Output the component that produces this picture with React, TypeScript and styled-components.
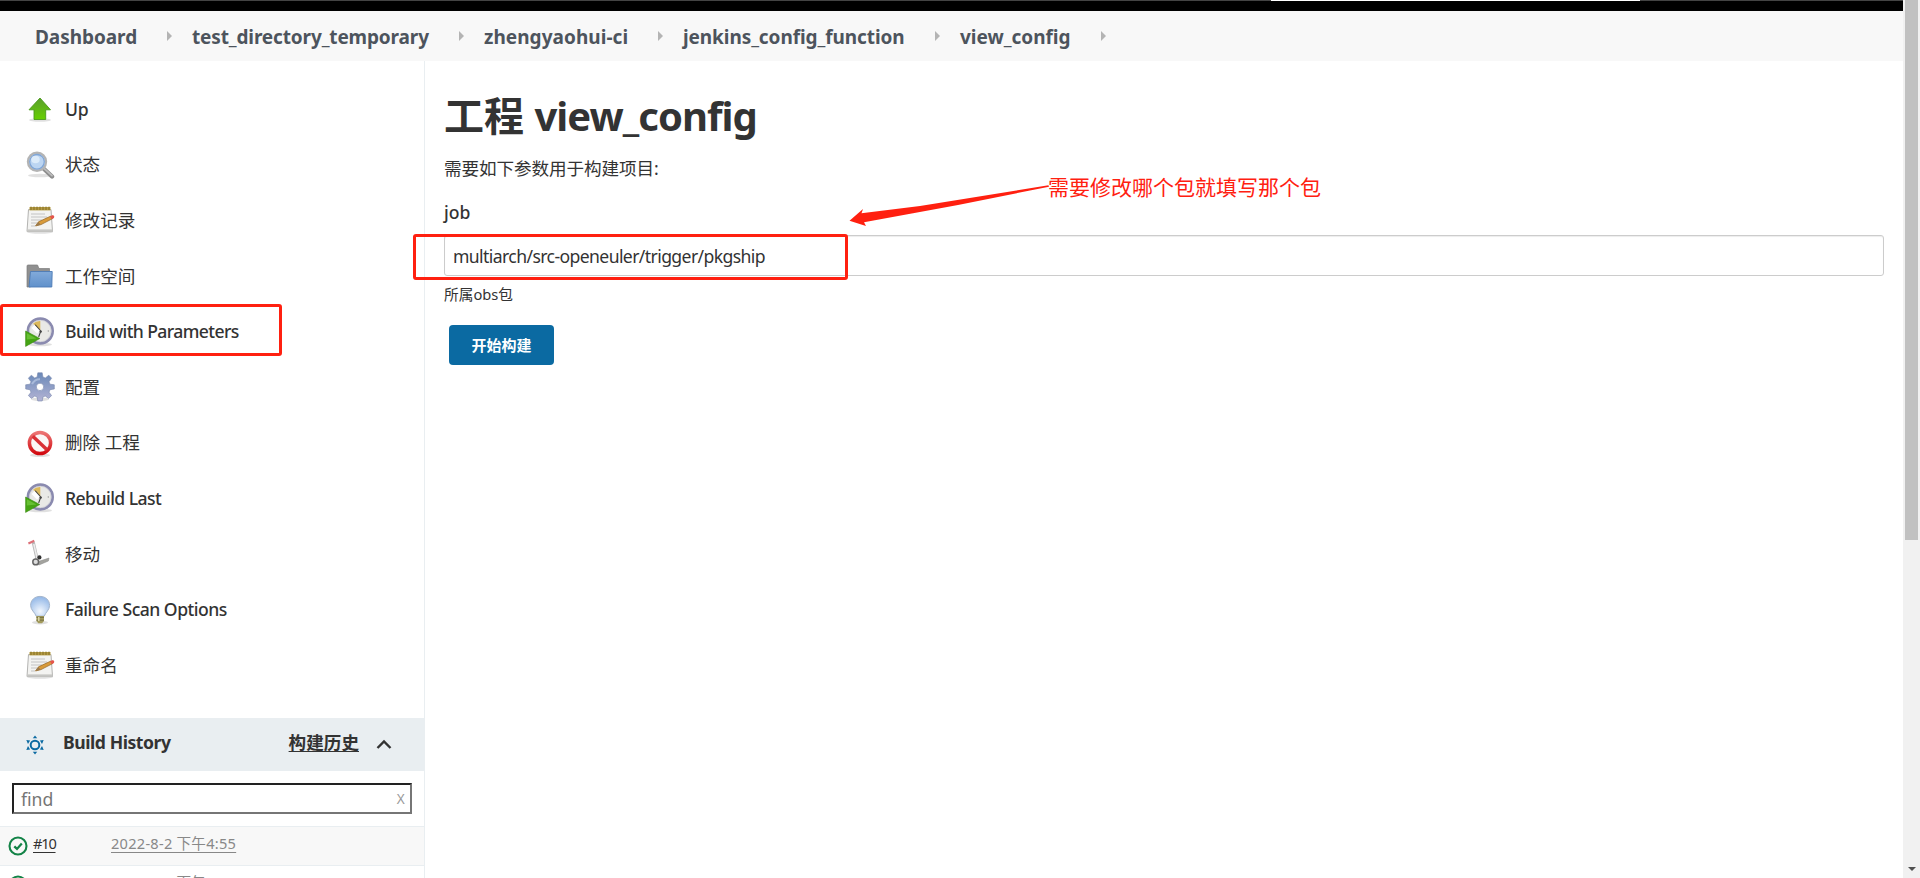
import React from "react";
import styled, { createGlobalStyle } from "styled-components";

const Global = createGlobalStyle`
  * { box-sizing: border-box; }
  body {
    margin: 0;
    overflow: hidden;
    background: #fff;
    color: #333;
    font-family: "Noto Sans", "Open Sans", "Noto Sans CJK SC", sans-serif;
    font-size: 17.6px;
  }
`;

const Screen = styled.div`
  position: relative;
  display: flex;
  width: 1920px;
  height: 878px;
  overflow: hidden;
`;

const Page = styled.div`
  width: 1903px;
  display: flex;
  flex-direction: column;
`;

const TopBar = styled.div`
  height: 11px;
  flex: none;
  background: #000;
  border-top: 1px solid #444;
`;

const TopBarHighlight = styled.div`
  position: absolute;
  top: 0;
  left: 1271px;
  width: 369px;
  height: 1px;
  background: #fff;
`;

const Breadcrumbs = styled.nav`
  height: 50px;
  flex: none;
  display: flex;
  align-items: center;
  background: #f8f8f8;
  padding-left: 35px;
`;

const Crumb = styled.a<{ $w: number; $ls: number }>`
  width: ${(p) => p.$w}px;
  flex: none;
  display: flex;
  padding-top: 2px;
  color: #4d545d;
  font-size: 19px;
  font-weight: 700;
  line-height: 26px;
  white-space: nowrap;
  letter-spacing: ${(p) => p.$ls}px;
`;

const CrumbArrow = styled.svg`
  width: 5px;
  height: 10px;
  margin-right: 20px;
  flex: none;
`;

const Columns = styled.div`
  flex: 1;
  min-height: 0;
  display: flex;
`;

const Sidebar = styled.aside`
  width: 425px;
  flex: none;
  border-right: 1px solid #e9eef1;
  padding-top: 20.5px;
  display: flex;
  flex-direction: column;
  overflow: hidden;
`;

const Tasks = styled.div`
  height: 636.5px;
  flex: none;
`;

const Task = styled.a<{ $ls?: number }>`
  height: 55.6px;
  display: flex;
  align-items: center;
  padding-left: 25px;
  gap: 10px;
  white-space: nowrap;
  letter-spacing: ${(p) => p.$ls ?? 0}px;
  font-weight: ${(p) => (p.$ls === undefined ? 400 : 500)};
  line-height: 24px;

  svg {
    width: 30px;
    height: 30px;
    flex: none;
  }

  span {
    padding-bottom: 1px;
  }
`;

const HistoryHeader = styled.div`
  height: 53px;
  flex: none;
  display: flex;
  align-items: center;
  background: #e9eef1;
  padding: 0 32px 1px 26px;
  font-weight: 700;
`;

const HistoryTitle = styled.span`
  margin-left: 19px;
  padding-bottom: 5px;
  flex: 1;
  letter-spacing: -0.45px;
`;

const HistoryTrend = styled.a`
  text-decoration: underline;
  text-underline-offset: 2px;
  text-decoration-thickness: 1px;
  margin-right: 17px;
  padding-bottom: 5px;
`;

const FindBox = styled.div`
  height: 31px;
  flex: none;
  margin: 12px 12px 12px;
  border: 2px solid;
  border-color: #222 #767676 #767676 #222;
  display: flex;
  align-items: center;
  justify-content: space-between;
  padding: 0 5px 0 7px;
  color: #757575;
  font-weight: 400;
`;

const FindClear = styled.span`
  color: #999;
  font-size: 14px;
  font-family: "Liberation Sans", sans-serif;
  transform: scaleX(0.9);
`;

const BuildRow = styled.div<{ $odd?: boolean }>`
  height: 39px;
  flex: none;
  display: flex;
  align-items: center;
  border-top: 1px solid #e9eef1;
  background: ${(p) => (p.$odd ? "#f8f8f8" : "#fff")};
  padding-left: 8px;
  font-size: 14.6px;

  svg {
    width: 20px;
    height: 20px;
    flex: none;
  }
`;

const BuildNumber = styled.a`
  width: 78px;
  margin-left: 5px;
  padding-bottom: 7px;
  text-decoration: underline;
  text-underline-offset: 3px;
  letter-spacing: -1.2px;
`;

const BuildDate = styled.a`
  color: #888;
  padding-bottom: 7px;
  text-decoration: underline;
  text-underline-offset: 3px;
  letter-spacing: 0.25px;
  white-space: nowrap;
`;

const Main = styled.main`
  flex: 1;
  padding: 29px 19px 0 19px;
  display: flex;
  flex-direction: column;
`;

const Title = styled.h1`
  margin: 0;
  height: 52px;
  line-height: 52px;
  font-size: 40px;
  font-weight: 700;
  white-space: nowrap;

  span {
    letter-spacing: -0.95px;
  }
`;

const Intro = styled.p`
  margin: 12px 0 0;
  height: 28px;
  line-height: 28px;
  font-weight: 400;
  letter-spacing: -0.1px;
`;

const FieldLabel = styled.label`
  margin-top: 15px;
  height: 30px;
  line-height: 30px;
  font-weight: 500;
`;

const FieldInput = styled.div`
  margin-top: 8px;
  height: 41px;
  border: 1px solid #ccc;
  border-radius: 3px;
  box-shadow: inset 0 1px 1px rgba(0, 0, 0, 0.075);
  padding-left: 8px;
  display: flex;
  align-items: center;
  letter-spacing: -0.6px;
  font-weight: 400;
`;

const Help = styled.div`
  margin-top: 7px;
  height: 22px;
  line-height: 22px;
  font-size: 14.7px;
  font-weight: 400;
`;

const BuildButton = styled.button`
  margin: 20px 0 0 5px;
  width: 105px;
  height: 40px;
  border: 0;
  border-radius: 4px;
  padding: 0 0 2px;
  background: #0b6aa2;
  color: #fff;
  font-family: inherit;
  font-size: 15px;
  font-weight: 700;
`;

const Scrollbar = styled.div`
  width: 17px;
  height: 878px;
  background: #f1f1f1;
  display: flex;
  flex-direction: column;
  align-items: center;
  justify-content: space-between;
  padding-bottom: 7px;
`;

const ScrollThumb = styled.div`
  width: 13px;
  height: 540px;
  background: #c1c1c1;
`;

const Marker = styled.div<{ $x: number; $y: number; $w: number; $h: number }>`
  position: absolute;
  left: ${(p) => p.$x}px;
  top: ${(p) => p.$y}px;
  width: ${(p) => p.$w}px;
  height: ${(p) => p.$h}px;
  border: 3px solid #ff2010;
  border-radius: 3px;
`;

const MarkerArrow = styled.svg`
  position: absolute;
  left: 840px;
  top: 180px;
  width: 210px;
  height: 50px;
`;

const MarkerNote = styled.div`
  position: absolute;
  left: 1048px;
  top: 172px;
  line-height: 30px;
  font-size: 21px;
  font-weight: 400;
  color: #ff2010;
  white-space: nowrap;
`;

const Shade = ({ cy = 26, rx = 11 }: { cy?: number; rx?: number }) => (
  <ellipse cx="15" cy={cy} rx={rx} ry="1.8" fill="#000" opacity="0.12" />
);

const UpIcon = () => (
  <svg viewBox="0 0 30 30">
    <defs>
      <linearGradient id="up" x1="0" y1="0" x2="0" y2="1">
        <stop offset="0" stopColor="#5a9e2c" />
        <stop offset="1" stopColor="#66d000" />
      </linearGradient>
    </defs>
    <Shade />
    <path d="M15 4 L25.5 15.8 H20.7 V25.5 H9 V15.8 H4 Z" fill="url(#up)" stroke="#4a9a1c" strokeWidth="0.9" strokeLinejoin="round" />
  </svg>
);

const SearchIcon = () => (
  <svg viewBox="0 0 30 30">
    <Shade cy={25.5} rx={12} />
    <path d="M18.5 18.5 L27 26.5" stroke="#8d8d8d" strokeWidth="4.4" strokeLinecap="round" />
    <path d="M19 18.3 L27 25.7" stroke="#bdbdbd" strokeWidth="1.8" strokeLinecap="round" />
    <circle cx="12" cy="11.8" r="9" fill="#e9eff7" stroke="#b4b4b4" strokeWidth="2.4" />
    <circle cx="12" cy="11.8" r="7.3" fill="#bcd5f2" stroke="#7fa5d6" strokeWidth="1.3" />
    <ellipse cx="10.5" cy="9.5" rx="4.2" ry="3.8" fill="#e2eefb" opacity="0.85" />
  </svg>
);

const NotepadIcon = () => (
  <svg viewBox="0 0 30 30">
    <Shade cy={27} rx={13} />
    <path d="M3.5 4.5 H26 L27.5 26.5 H2 Z" fill="#f3f3f1" stroke="#b3b3b1" strokeWidth="1" />
    <path d="M2 24.4 H27.5 V26.8 H2 Z" fill="#c6c6c4" />
    <rect x="4.5" y="2" width="21" height="3.4" fill="#b59b45" />
    <path d="M6 1.6 V5 M9 1.6 V5 M12 1.6 V5 M15 1.6 V5 M18 1.6 V5 M21 1.6 V5 M24 1.6 V5" stroke="#806c20" strokeWidth="0.9" />
    <path d="M6 9 H20 M6 12 H22 M6 15 H17 M6 18 H12 M6 21 H10" stroke="#c3c3c3" strokeWidth="1" />
    <path d="M10.5 21 L13.5 16.8 L26 11 L27.6 13.6 L16 19.6 Z" fill="#d99b3a" stroke="#926321" strokeWidth="0.7" />
    <path d="M10.5 21 L13.5 16.8 L15.5 19.8 Z" fill="#9b7a4c" />
    <path d="M25 11.2 L28 10 Q30 11 29 13 L26.6 14.2 Z" fill="#e4554c" />
  </svg>
);

const FolderIcon = () => (
  <svg viewBox="0 0 30 30">
    <defs>
      <linearGradient id="folder" x1="0" y1="0" x2="0" y2="1">
        <stop offset="0" stopColor="#82aada" />
        <stop offset="1" stopColor="#6091cb" />
      </linearGradient>
    </defs>
    <path d="M2 26 V5 Q2 4 3 4 H12.5 L14 7.5 H24.5 V12 H5.5 V26 Z" fill="#909090" stroke="#7c7c7c" strokeWidth="0.7" />
    <path d="M5.5 10.5 H27.2 L26.8 26 H4 Z" fill="url(#folder)" stroke="#4c7bb5" strokeWidth="0.9" strokeLinejoin="round" />
  </svg>
);

const ClockIcon = () => (
  <svg viewBox="0 0 30 30">
    <Shade cy={27.5} rx={12} />
    <circle cx="15.3" cy="14" r="12.4" fill="#e9e9e6" stroke="#8a8aaf" strokeWidth="2.6" />
    <circle cx="15.3" cy="14" r="10.8" fill="none" stroke="#c5c5d0" strokeWidth="0.6" />
    <path d="M15.3 13 L8 6.8 Q11 3.8 15.3 4 Z" fill="#dcb95a" />
    <path d="M8 9.5 L13.5 15" stroke="#fff" strokeWidth="4" />
    <path d="M10.5 8 L15.8 14 M15.8 14 L13.8 19.5" stroke="#444" strokeWidth="1.1" strokeLinecap="round" />
    <circle cx="15.7" cy="14.6" r="1.2" fill="#444" />
    <circle cx="23.3" cy="14" r="0.7" fill="#999" />
    <path d="M0.6 14 L14.8 21.5 L0.6 29.4 Z" fill="#45a414" stroke="#3a8a12" strokeWidth="0.6" />
    <path d="M1.8 16.2 L11.5 21.4 L1.8 22.4 Z" fill="#79cf45" opacity="0.65" />
  </svg>
);

const GearIcon = () => (
  <svg viewBox="0 0 30 30">
    <defs>
      <linearGradient id="gear" x1="0" y1="0" x2="0" y2="1">
        <stop offset="0" stopColor="#6a89b8" />
        <stop offset="1" stopColor="#b3b3d4" />
      </linearGradient>
    </defs>
    <Shade cy={27.3} rx={9} />
    <path
      fill="url(#gear)"
      stroke="#7787ad"
      strokeWidth="0.6"
      fillRule="evenodd"
      d="M12.8 0.8 H17.2 L17.9 5 L20.3 6 L23.8 3.2 L26.6 6.2 L24 9.8 L25 12.2 L29.3 12.8 V17 L25 17.7 L24 20.2 L26.6 23.6 L23.6 26.4 L20.2 24 L17.9 25 L17.2 29 H12.8 L12.1 25 L9.8 24 L6.4 26.4 L3.4 23.6 L6 20.2 L5 17.7 L0.7 17 V12.8 L5 12.2 L6 9.8 L3.4 6.2 L6.3 3.2 L9.7 6 L12.1 5 Z M15 11.2 A3.7 3.7 0 1 0 15 18.6 A3.7 3.7 0 1 0 15 11.2 Z"
    />
    <path d="M7 12 Q10 7 15 7.2" fill="none" stroke="#b9c9e4" strokeWidth="2" opacity="0.7" />
  </svg>
);

const StopIcon = () => (
  <svg viewBox="0 0 30 30">
    <defs>
      <linearGradient id="stop" x1="0" y1="0" x2="0" y2="1">
        <stop offset="0" stopColor="#ec7474" />
        <stop offset="1" stopColor="#d20a10" />
      </linearGradient>
    </defs>
    <Shade cy={27.2} rx={10} />
    <circle cx="15" cy="15" r="10.6" fill="#fbf6f6" stroke="url(#stop)" strokeWidth="3.5" />
    <path d="M7.8 8.2 L22 21.8" stroke="#d93036" strokeWidth="3.4" />
  </svg>
);

const TruckIcon = () => (
  <svg viewBox="0 0 30 30">
    <path d="M8.2 3 L12.3 21" stroke="#b9b9b9" strokeWidth="3.2" />
    <path d="M8.8 5 L12.4 20.5" stroke="#ededed" strokeWidth="1.6" />
    <path d="M3.4 4.4 L9.3 1.8" stroke="#dd7078" strokeWidth="2.2" />
    <path d="M10 23.6 L24 19 L23.4 22 L14 26 Z" fill="#a3a39e" stroke="#888" strokeWidth="0.5" />
    <circle cx="14.4" cy="18.4" r="2.1" fill="#333" />
    <circle cx="10.7" cy="22.9" r="2.9" fill="#ddd" stroke="#666" strokeWidth="1.5" />
  </svg>
);

const BulbIcon = () => (
  <svg viewBox="0 0 30 30">
    <defs>
      <radialGradient id="bulb" cx="0.5" cy="0.75" r="0.75">
        <stop offset="0" stopColor="#f2f7fe" />
        <stop offset="1" stopColor="#91b6e6" />
      </radialGradient>
    </defs>
    <Shade cy={27.6} rx={8} />
    <path d="M15 1.4 C20.8 1.4 24.6 5.4 24.6 10.4 C24.6 15 20.5 17.4 19.2 21.2 H11.2 C10 17.4 5.6 15 5.6 10.4 C5.6 5.4 9.4 1.4 15 1.4 Z" fill="url(#bulb)" stroke="#a5b6cc" strokeWidth="1" />
    <path d="M11.4 21 H19 V26 L17 28.3 H13.3 L11.4 26 Z" fill="#a39b5c" />
    <path d="M11.4 22.4 H19 M11.4 25.2 H19" stroke="#6b6640" strokeWidth="0.8" />
    <path d="M13.8 22 V26" stroke="#e4dfb0" strokeWidth="1.4" />
  </svg>
);

const WeatherIcon = () => (
  <svg width="18" height="22" viewBox="0 0 18 22">
    <circle cx="9" cy="12" r="4.3" fill="none" stroke="#0b6aa2" strokeWidth="2" />
    <g fill="#0b6aa2">
      <path d="M9 2.4 L11.2 5.3 H6.8 Z" />
      <path d="M9 21.6 L11.2 18.7 H6.8 Z" />
      <path d="M0.3 6.9 L4.1 7.5 L2 11 Z" />
      <path d="M17.7 6.9 L13.9 7.5 L16 11 Z" />
      <path d="M0.3 17.1 L4.1 16.5 L2 13 Z" />
      <path d="M17.7 17.1 L13.9 16.5 L16 13 Z" />
    </g>
  </svg>
);

const SuccessIcon = () => (
  <svg viewBox="0 0 20 20">
    <circle cx="10" cy="10" r="8.5" fill="none" stroke="#138347" strokeWidth="2.1" />
    <path d="M6.3 10.3 L9 12.9 L13.8 7.6" fill="none" stroke="#138347" strokeWidth="2.3" />
  </svg>
);

const crumbs: { label: string; w: number; ls: number }[] = [
  { label: "Dashboard", w: 132, ls: -0.05 },
  { label: "test_directory_temporary", w: 267, ls: -0.14 },
  { label: "zhengyaohui-ci", w: 174, ls: 0.05 },
  { label: "jenkins_config_function", w: 252, ls: -0.08 },
  { label: "view_config", w: 141, ls: 0 },
];

const tasks: { label: string; icon: React.ReactNode; ls?: number }[] = [
  { label: "Up", icon: <UpIcon />, ls: -0.3 },
  { label: "状态", icon: <SearchIcon /> },
  { label: "修改记录", icon: <NotepadIcon /> },
  { label: "工作空间", icon: <FolderIcon /> },
  { label: "Build with Parameters", icon: <ClockIcon />, ls: -0.6 },
  { label: "配置", icon: <GearIcon /> },
  { label: "删除 工程", icon: <StopIcon /> },
  { label: "Rebuild Last", icon: <ClockIcon />, ls: -0.55 },
  { label: "移动", icon: <TruckIcon /> },
  { label: "Failure Scan Options", icon: <BulbIcon />, ls: -0.52 },
  { label: "重命名", icon: <NotepadIcon /> },
];

const builds = [
  { number: "#10", date: "2022-8-2 下午4:55" },
  { number: "#9", date: "2022-8-1 下午4:24" },
];

export default function App() {
  return (
    <Screen>
      <Global />
      <Page>
        <TopBar />
        <Breadcrumbs>
          {crumbs.map((c) => (
            <React.Fragment key={c.label}>
              <Crumb $w={c.w} $ls={c.ls}>{c.label}</Crumb>
              <CrumbArrow viewBox="0 0 5 10">
                <path d="M0 0 L5 5 L0 10 Z" fill="#b4b4b4" />
              </CrumbArrow>
            </React.Fragment>
          ))}
        </Breadcrumbs>
        <Columns>
          <Sidebar>
            <Tasks>
              {tasks.map((t) => (
                <Task key={t.label} $ls={t.ls}>
                  {t.icon}
                  <span>{t.label}</span>
                </Task>
              ))}
            </Tasks>
            <HistoryHeader>
              <WeatherIcon />
              <HistoryTitle>Build History</HistoryTitle>
              <HistoryTrend>构建历史</HistoryTrend>
              <svg width="16" height="12" viewBox="0 0 16 12">
                <path d="M1.5 10 L8 3.5 L14.5 10" fill="none" stroke="#333" strokeWidth="2.4" />
              </svg>
            </HistoryHeader>
            <FindBox>
              <span>find</span>
              <FindClear>X</FindClear>
            </FindBox>
            {builds.map((b, i) => (
              <BuildRow key={b.number} $odd={i % 2 === 0}>
                <SuccessIcon />
                <BuildNumber>{b.number}</BuildNumber>
                <BuildDate>{b.date}</BuildDate>
              </BuildRow>
            ))}
          </Sidebar>
          <Main>
            <Title>工程 <span>view_config</span></Title>
            <Intro>需要如下参数用于构建项目:</Intro>
            <FieldLabel>job</FieldLabel>
            <FieldInput>multiarch/src-openeuler/trigger/pkgship</FieldInput>
            <Help>所属obs包</Help>
            <BuildButton>开始构建</BuildButton>
          </Main>
        </Columns>
      </Page>
      <Scrollbar>
        <ScrollThumb />
        <svg width="8" height="4" viewBox="0 0 8 4">
          <path d="M0 0 H8 L4 4 Z" fill="#505050" />
        </svg>
      </Scrollbar>
      <TopBarHighlight />
      <Marker $x={0} $y={304} $w={282} $h={52} />
      <Marker $x={413} $y={234} $w={435} $h={46} />
      <MarkerArrow viewBox="0 0 210 50">
        <path d="M9.5 40.7 L23 29 L21.5 33.3 L80 26 L208.5 5.3 L209 6.7 L118 25 L24 42.3 L26 46 Z" fill="#ff2010" />
      </MarkerArrow>
      <MarkerNote>需要修改哪个包就填写那个包</MarkerNote>
    </Screen>
  );
}
